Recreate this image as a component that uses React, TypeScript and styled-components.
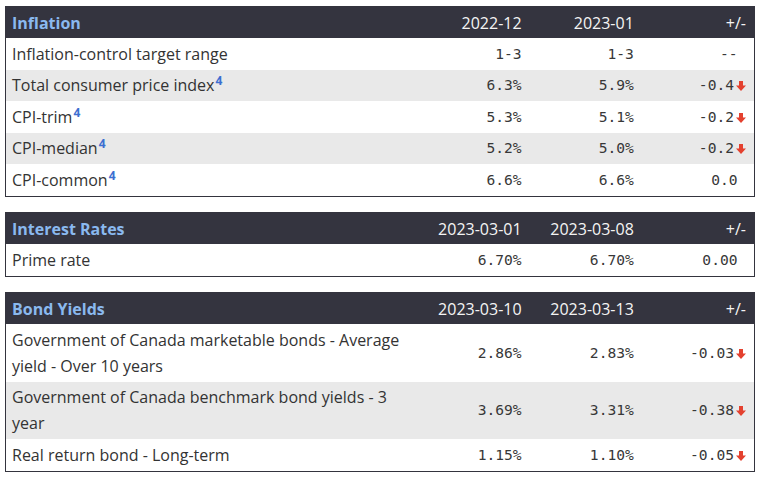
import React from "react";
import styled, { createGlobalStyle } from "styled-components";

const Global = createGlobalStyle`
  html, body { margin: 0; padding: 0; background: #ffffff; }
  body { font-family: "Open Sans", "Noto Sans", sans-serif; color: #333333; }
`;

const Page = styled.div`
  padding: 6px 0 0 5px;
  display: flex;
  flex-direction: column;
  gap: 15.5px;
  width: 750px;
`;

const DataTable = styled.table`
  width: 750px;
  table-layout: fixed;
  border-collapse: separate;
  border-spacing: 0;
  border: 1px solid #34343e;
`;

const HeadRow = styled.tr`
  background: #34343f;
`;

const HeadCell = styled.th<{ $align?: "left" | "right" }>`
  height: 31px;
  padding: 0 8px 0 6px;
  font-size: 16px;
  line-height: 24px;
  font-weight: 400;
  color: #f4f4f4;
  text-align: ${(p) => p.$align ?? "right"};
`;

const Title = styled.span`
  font-weight: 700;
  color: #8ab9ef;
`;

const Row = styled.tr`
  background: #ffffff;
  &:nth-child(even) {
    background: #e9e9e9;
  }
`;

const LabelCell = styled.td`
  padding: 2.75px 8px 2.75px 6px;
  font-size: 16px;
  line-height: 26px;
  color: #333333;
  vertical-align: middle;
`;

const NumCell = styled.td`
  padding: 2.75px 8px 2.75px 6px;
  font-family: "DejaVu Sans Mono", "Liberation Mono", monospace;
  font-size: 14.6px;
  line-height: 26px;
  color: #383838;
  text-align: right;
  vertical-align: middle;
  white-space: pre;
`;

const Sup = styled.sup`
  font-size: 12px;
  font-weight: 700;
  color: #3d6fd1;
  line-height: 0;
  vertical-align: 6px;
  margin-left: 1px;
`;

const ArrowSvg = styled.svg`
  width: 10px;
  height: 10px;
  margin-left: 2px;
  vertical-align: -1px;
`;

const Spacer = styled.span`
  display: inline-block;
  width: 8.5px;
`;

const DownArrow = () => (
  <ArrowSvg viewBox="0 0 10 10">
    <path d="M3 0 H7 V4.6 H10 L5 10 L0 4.6 H3 Z" fill="#e4412f" />
  </ArrowSvg>
);

type RowData = {
  label: string;
  sup?: boolean;
  a: string;
  b: string;
  diff: string;
  down?: boolean;
};

type Section = {
  title: string;
  c1: string;
  c2: string;
  rows: RowData[];
};

const sections: Section[] = [
  {
    title: "Inflation",
    c1: "2022-12",
    c2: "2023-01",
    rows: [
      { label: "Inflation-control target range", a: "1-3", b: "1-3", diff: "--" },
      { label: "Total consumer price index", sup: true, a: "6.3%", b: "5.9%", diff: "-0.4", down: true },
      { label: "CPI-trim", sup: true, a: "5.3%", b: "5.1%", diff: "-0.2", down: true },
      { label: "CPI-median", sup: true, a: "5.2%", b: "5.0%", diff: "-0.2", down: true },
      { label: "CPI-common", sup: true, a: "6.6%", b: "6.6%", diff: "0.0" },
    ],
  },
  {
    title: "Interest Rates",
    c1: "2023-03-01",
    c2: "2023-03-08",
    rows: [{ label: "Prime rate", a: "6.70%", b: "6.70%", diff: "0.00" }],
  },
  {
    title: "Bond Yields",
    c1: "2023-03-10",
    c2: "2023-03-13",
    rows: [
      {
        label: "Government of Canada marketable bonds - Average yield - Over 10 years",
        a: "2.86%",
        b: "2.83%",
        diff: "-0.03",
        down: true,
      },
      {
        label: "Government of Canada benchmark bond yields - 3 year",
        a: "3.69%",
        b: "3.31%",
        diff: "-0.38",
        down: true,
      },
      { label: "Real return bond - Long-term", a: "1.15%", b: "1.10%", diff: "-0.05", down: true },
    ],
  },
];

export default function App() {
  return (
    <>
      <Global />
      <Page>
        {sections.map((s) => (
          <DataTable key={s.title}>
            <colgroup>
              <col style={{ width: "55%" }} />
              <col style={{ width: "15%" }} />
              <col style={{ width: "15%" }} />
              <col style={{ width: "15%" }} />
            </colgroup>
            <thead>
              <HeadRow>
                <HeadCell $align="left">
                  <Title>{s.title}</Title>
                </HeadCell>
                <HeadCell>{s.c1}</HeadCell>
                <HeadCell>{s.c2}</HeadCell>
                <HeadCell>+/-</HeadCell>
              </HeadRow>
            </thead>
            <tbody>
              {s.rows.map((r) => (
                <Row key={r.label}>
                  <LabelCell>
                    {r.label}
                    {r.sup && <Sup>4</Sup>}
                  </LabelCell>
                  <NumCell>{r.a}</NumCell>
                  <NumCell>{r.b}</NumCell>
                  <NumCell>
                    {r.diff}
                    {r.down ? <DownArrow /> : <Spacer />}
                  </NumCell>
                </Row>
              ))}
            </tbody>
          </DataTable>
        ))}
      </Page>
    </>
  );
}
